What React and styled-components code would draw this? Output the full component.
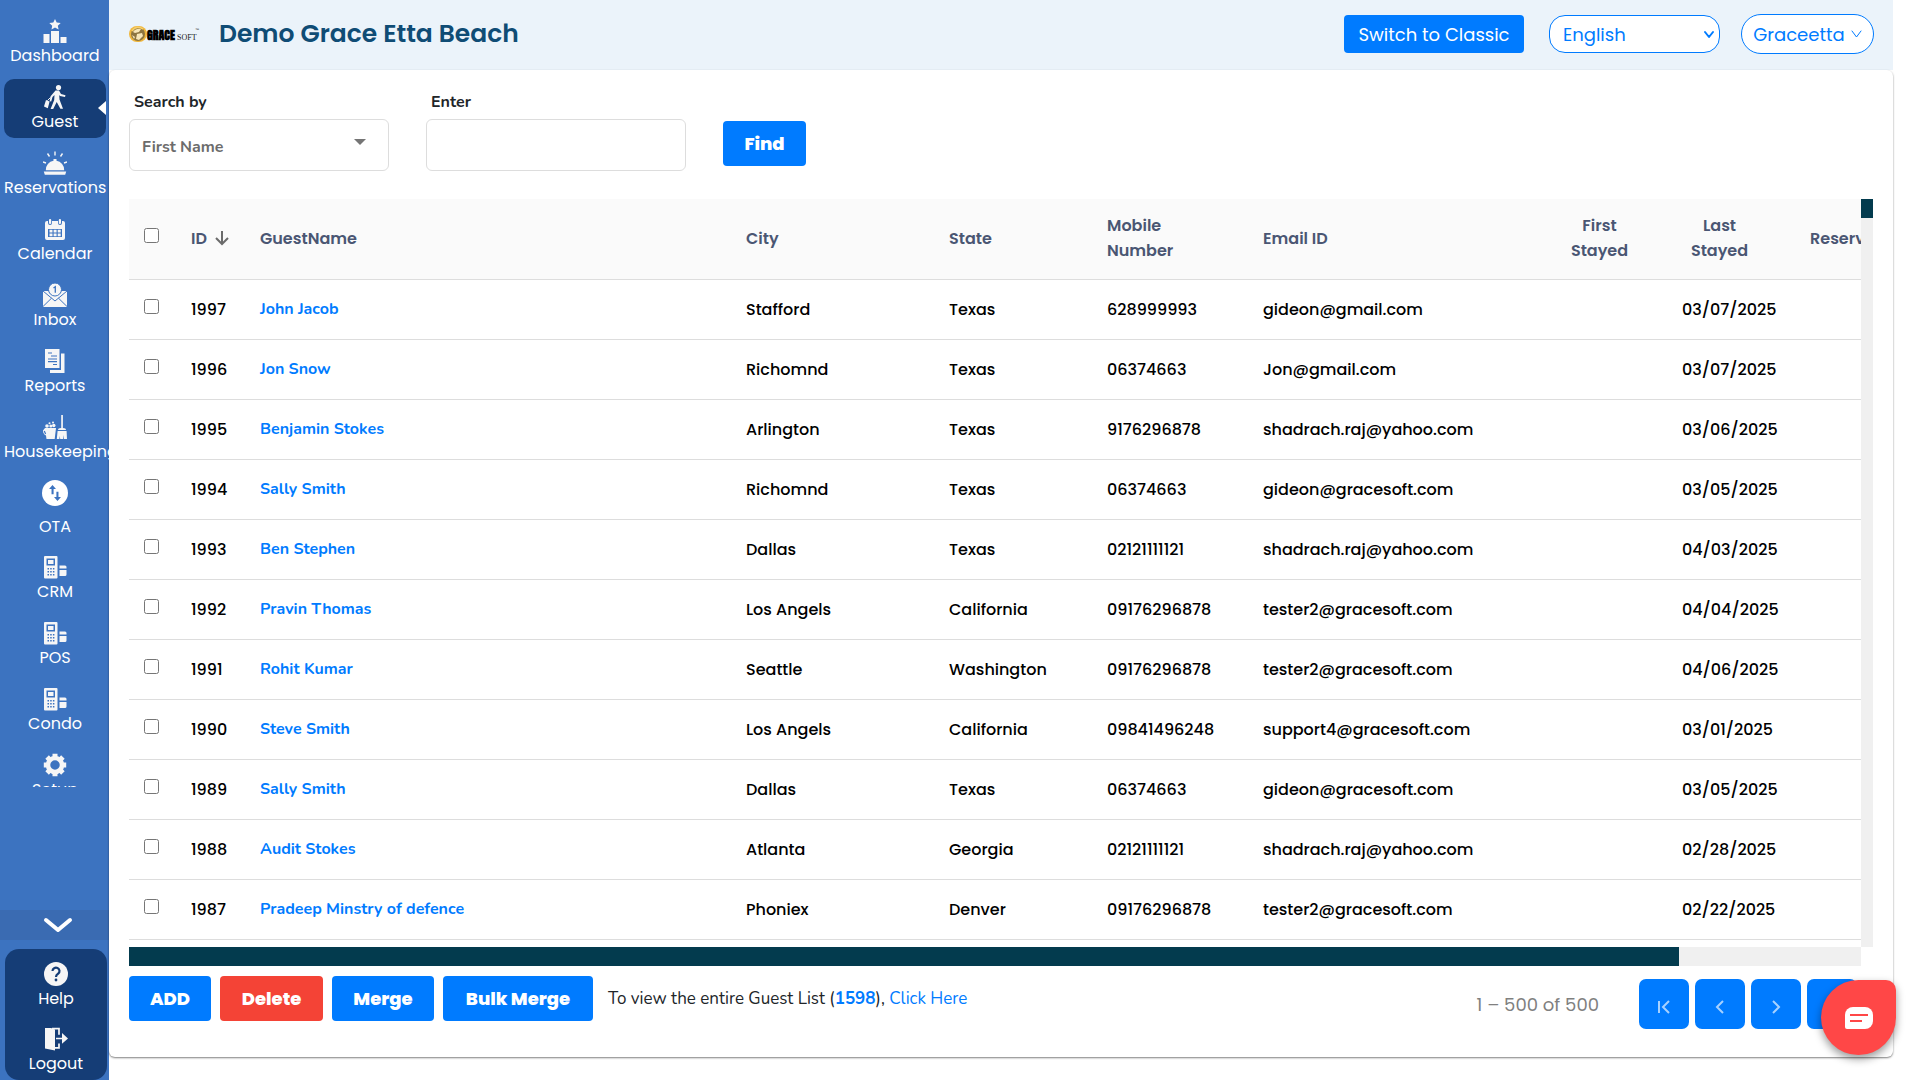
import React from 'react'
import styled, { createGlobalStyle } from 'styled-components'

const poppins = `Poppins, Inter, sans-serif`
const nunito = `Nunito, "Open Sans", sans-serif`

const GlobalStyle = createGlobalStyle`
    *, *::before, *::after {
        box-sizing: border-box;
    }
    body {
        margin: 0;
        background: #fff;
        font-family: ${poppins};
        font-size: 16px;
        overflow: hidden;
    }
    button, input, select {
        font-family: inherit;
        margin: 0;
    }
    a {
        text-decoration: none;
    }
`

const Page = styled.div`
    display: flex;
    height: 100vh;
`

/* sidebar */
const Sidebar = styled.aside`
    display: flex;
    flex-direction: column;
    flex: none;
    width: 109px;
    background: #3c73c0;
    overflow: hidden;
`
const NavSlot = styled.div`
    flex: 1;
    min-height: 0;
    padding-bottom: 123px;
`
const Nav = styled.nav`
    display: flex;
    flex-direction: column;
    gap: 7px;
    height: 100%;
    padding: 13px 3px 0 4px;
    overflow: hidden;
`
const NavItem = styled.a`
    position: relative;
    flex: none;
    display: flex;
    flex-direction: column;
    gap: ${p => (p.$tall ? '10px' : '2px')};
    height: ${p => (p.$tall ? '67px' : '59px')};
    padding-top: ${p => (p.$tall ? '5px' : '6px')};
    border-radius: 10px;
    background: ${p => (p.$active ? '#153d76' : 'transparent')};
    color: #fff;
    font-size: 16px;
    line-height: 22px;
    text-align: center;
    white-space: nowrap;

    svg {
        display: block;
        flex: none;
        align-self: center;
    }
`
const ActiveMark = styled.i`
    position: absolute;
    right: 0;
    top: 22px;
    border: 7px solid transparent;
    border-left: 0;
    border-right: 8px solid #fff;
`
const MoreButton = styled.button`
    display: flex;
    align-items: center;
    justify-content: center;
    height: 30px;
    padding: 0 0 0 6px;
    border: 0;
    background: #3a6bb2;
    color: #fff;
`
const SideFooter = styled.div`
    display: flex;
    flex-direction: column;
    gap: 6px;
    height: 131px;
    margin: 9px 2px 0 5px;
    padding-top: 7px;
    border-radius: 14px;
    background: #153d76;
`

/* top bar */
const Main = styled.main`
    display: flex;
    flex-direction: column;
    flex: 1;
    min-width: 0;
    padding: 0 27px 23px 0;
`
const TopBar = styled.header`
    display: flex;
    align-items: center;
    flex: none;
    height: 70px;
    padding: 0 19px 2px 20px;
    background: #ebf3fa;
`
const Title = styled.h1`
    flex: 1;
    margin: 0 0 0 19px;
    color: #0f4c75;
    font-size: 25px;
    font-weight: 600;
    line-height: 36px;
`
const SwitchButton = styled.button`
    width: 180px;
    height: 38px;
    padding: 0;
    border: 0;
    border-radius: 4px;
    background: #007bff;
    color: #fff;
    font-size: 18px;
`
const LanguageBox = styled.div`
    display: grid;
    align-items: center;
    margin: 0 21px 0 25px;
    color: #007bff;

    > * {
        grid-area: 1 / 1;
    }
    svg {
        justify-self: end;
        margin-right: 5px;
        pointer-events: none;
    }
`
const Language = styled.select`
    appearance: none;
    width: 171px;
    height: 38px;
    padding: 0 13px;
    border: 1px solid #007bff;
    border-radius: 16px;
    background: #fff;
    color: #007bff;
    font-size: 18px;
`
const UserButton = styled.button`
    display: flex;
    align-items: center;
    justify-content: center;
    gap: 6px;
    width: 133px;
    height: 40px;
    padding: 0;
    border: 1px solid #007bff;
    border-radius: 20px;
    background: #fff;
    color: #007bff;
    font-size: 18px;
`

/* card */
const Card = styled.section`
    display: flex;
    flex-direction: column;
    flex: 1;
    min-height: 0;
    padding: 20px 20px 28px;
    border-radius: 6px;
    background: #fff;
    box-shadow: 0 1px 2px rgba(0, 0, 0, 0.5);
`
const SearchForm = styled.form`
    display: flex;
    align-items: flex-end;
    gap: 37px;
    margin-bottom: 28px;
    font-family: ${nunito};
`
const Field = styled.div`
    display: grid;
    grid-template-rows: 24px 52px;
    row-gap: 5px;
    width: 260px;
`
const Label = styled.label`
    padding-left: 5px;
    color: #212529;
    font-size: 16px;
    font-weight: 700;
    line-height: 24px;
`
const SelectBox = styled.div`
    display: grid;
    align-items: center;

    > * {
        grid-area: 1 / 1;
    }
    svg {
        justify-self: end;
        margin: 0 23px 6px 0;
        pointer-events: none;
    }
`
const SearchBy = styled.select`
    appearance: none;
    width: 100%;
    height: 52px;
    padding: 3px 12px 0;
    border: 1px solid #ddd;
    border-radius: 6px;
    background: #fff;
    color: #6c6c6c;
    font-size: 16px;
    font-weight: 700;
`
const TextInput = styled.input`
    width: 100%;
    height: 52px;
    padding: 0 13px;
    border: 1px solid #ddd;
    border-radius: 6px;
    font-size: 16px;
`
const Button = styled.button`
    flex: none;
    height: 45px;
    width: ${p => p.$width}px;
    padding: 0;
    border: 0;
    border-radius: 4px;
    background: ${p => (p.$danger ? '#f44336' : '#007bff')};
    color: #fff;
    font-family: ${poppins};
    font-size: 18px;
    font-weight: 800;
`
const FindSlot = styled.div`
    padding-bottom: 5px;
`

/* table */
const TableArea = styled.div`
    display: grid;
    grid-template-columns: minmax(0, 1fr) 12px;
    grid-template-rows: minmax(0, 1fr) 19px;
    flex: 1;
    min-height: 0;
`
const Viewport = styled.div`
    overflow: hidden;
`
const VerticalTrack = styled.div`
    background: #f0f0f0;
`
const VerticalThumb = styled.div`
    height: 19px;
    background: #033b4e;
`
const HorizontalTrack = styled.div`
    background: #f0f0f0;
`
const HorizontalThumb = styled.div`
    width: 89.5%;
    height: 100%;
    background: #033b4e;
`
const Table = styled.table`
    width: 1935px;
    table-layout: fixed;
    border-collapse: separate;
    border-spacing: 0;
`
const HeadCell = styled.th`
    height: 81px;
    padding: 0 10px 2px;
    border-bottom: 1px solid #ddd;
    background: #fafafa;
    color: #4a5673;
    font-size: 16px;
    font-weight: 600;
    line-height: 25px;
    text-align: left;
`
const Cell = styled.td`
    height: 60px;
    padding: 0 10px;
    border-bottom: 1px solid #ddd;
    color: #000;
    font-size: 16px;
    font-weight: 500;
    white-space: nowrap;
`
const SortLabel = styled.span`
    display: flex;
    align-items: center;
    gap: 8px;
`
const Stacked = styled.span`
    display: block;
    width: 75px;
    text-align: ${p => (p.$center ? 'center' : 'left')};
`
const Check = styled.input`
    display: block;
    width: 15px;
    height: 15px;
    margin: 0 0 6px 5px;
`
const GuestLink = styled.a`
    display: block;
    padding-bottom: 2px;
    color: #007bff;
    font-family: ${nunito};
    font-size: 16px;
    font-weight: 700;
`

/* footer */
const Footer = styled.div`
    display: flex;
    align-items: flex-start;
    flex: none;
    gap: 9px;
    padding-top: 10px;
`
const Note = styled.p`
    flex: 1;
    margin: 0 0 0 6px;
    color: #212529;
    font-family: ${nunito};
    font-size: 17px;
    line-height: 45px;

    a {
        color: #007bff;
    }
    b {
        color: #007bff;
        font-weight: 700;
    }
`
const Pager = styled.div`
    display: flex;
    align-items: center;
    gap: 6px;
    padding: 3px 16px 0 0;
`
const PageRange = styled.span`
    margin-right: 34px;
    color: #808080;
    font-size: 18px;
`
const PageButton = styled.button`
    display: flex;
    align-items: center;
    justify-content: center;
    width: 50px;
    height: 50px;
    padding: 5px 0 0;
    border: 0;
    border-radius: 7px;
    background: #007bff;
`
const Chat = styled.button`
    position: fixed;
    right: 24px;
    bottom: 25px;
    display: flex;
    align-items: center;
    justify-content: center;
    width: 75px;
    height: 75px;
    padding: 0;
    border: 0;
    border-radius: 50% 10px 50% 50%;
    background: #ff4747;
    box-shadow: 0 4px 8px rgba(0, 0, 0, 0.4);
`

const Icon = ({ children, size = 24 }) => (
  <svg width={size} height={size} viewBox="0 0 24 24" fill="#f6f6f6" aria-hidden="true">
    {children}
  </svg>
)

const DashboardIcon = () => (
  <Icon>
    <path d="M12 0l1.700 3.600 4 .4-2.900 2.700.8 3.900L12 8.600l-3.500 2 .7-3.900L6.300 4l4-.4z" />
    <path d="M.5 15h6v9h-6zM8 12h8v12H8zM17.500 18h6v6h-6z" />
  </Icon>
)
const GuestIcon = () => (
  <Icon>
    <circle cx="15.500" cy="2.600" r="2.600" />
    <path d="M12.500 5.500h3.500l2 3.500 4.500 1.300-.5 1.600-5-1-.8-1 .3 4.500 3.500 9.300h-2.600L13.700 17l-3.500 7H7.600l3.600-9 .3-5-2 2-1.300 4.500-1.600-.3 1-5z" />
    <path d="M3 15l3.600 1.500-1.800 6.800L1 21.500z" />
    <path d="M4.500 15.500l3-3" stroke="#f6f6f6" />
  </Icon>
)
const BellIcon = () => (
  <Icon>
    <path d="M.8 20.500h22.400l-1 3.200H1.800zM2.800 19.200a9.200 9.200 0 0 1 7.700-9.400V8h3v1.800a9.200 9.200 0 0 1 7.700 9.400z" />
    <path d="M12 .5v4M4.500 2.500l2 3M19.500 2.500l-2 3M0 11l3 1M24 11l-3 1" stroke="#f6f6f6" strokeWidth="1.400" />
  </Icon>
)
const CalendarIcon = () => (
  <Icon>
    <path fillRule="evenodd" d="M4 4h1v2a2 2 0 0 0 4 0V4h6v2a2 2 0 0 0 4 0V4h1a2 2 0 0 1 2 2v15a2 2 0 0 1-2 2H4a2 2 0 0 1-2-2V6a2 2 0 0 1 2-2zm1 8v8h14v-8z" />
    <rect x="6" y="2" width="2.200" height="5" rx="1" />
    <rect x="15.800" y="2" width="2.200" height="5" rx="1" />
    <path d="M6.500 12.800h3v2.700h-3zM10.600 12.800h3v2.700h-3zM14.700 12.800h3v2.700h-3zM6.500 16.600h3v2.700h-3zM10.600 16.600h3v2.700h-3zM14.700 16.600h3v2.700h-3z" />
  </Icon>
)
const InboxIcon = () => (
  <Icon>
    <path d="M0 8h24v16H0z" />
    <path d="M0 8l12 10L24 8M0 23.500l8.500-8.300M24 23.500l-8.500-8.300" fill="none" stroke="#3c73c0" />
    <circle cx="12" cy="6.500" r="6.500" stroke="#3c73c0" />
    <path d="M10.500 5l1.800-1.300v6" fill="none" stroke="#3c73c0" strokeWidth="1.300" />
  </Icon>
)
const ReportsIcon = () => (
  <Icon>
    <path d="M2 0h14.500v19H2z" />
    <path d="M18 4.500h3.500V24H7v-3h11z" />
    <path d="M5 4h4M8 7h6M5 10h9M5 12.700h9M10 15.500h4" stroke="#3c73c0" strokeWidth="1.200" />
  </Icon>
)
const CleaningIcon = () => (
  <Icon>
    <path d="M18.200 0h1.700v13h-1.700zM15 15q0-2 3-2h2q3 0 3 2zM14.600 16h9l.4 8h-3l-.5-4-.3 4h-3l-.4-3-.4 3H13.800z" />
    <path d="M2 13h11l-1.300 11H3.500L3 20.500Q0 19 0 15.500z" />
    <path d="M1.300 16l1.300 3" stroke="#3c73c0" strokeWidth="1.200" />
    <circle cx="4" cy="11" r="1.800" />
    <circle cx="7.800" cy="11" r="1.500" />
    <circle cx="10.800" cy="10.500" r="1.700" />
    <circle cx="6.500" cy="8.300" r="1" />
    <circle cx="10" cy="7.500" r="1" />
  </Icon>
)
const OtaIcon = () => (
  <Icon size={26}>
    <circle cx="12" cy="12" r="12" fill="#fff" />
    <path d="M9.700 4.700l3.200 3.500h-2.200v5H8.800v-5H6.500zM14.300 19.300l-3.200-3.500h2.200v-5h1.900v5h2.300z" fill="#3c73c0" />
  </Icon>
)
const TerminalIcon = () => (
  <Icon>
    <path fillRule="evenodd" d="M2 1h11.500a1 1 0 0 1 1 1v20.500a1 1 0 0 1-1 1H2a1 1 0 0 1-1-1V2a1 1 0 0 1 1-1zm1.500 2.500v7h8.500v-7zM5 5h5.500v4H5z" />
    <path d="M4.500 13.800H12M4.500 16.800H12M4.500 19.800H12" stroke="#3c73c0" strokeWidth="1.500" strokeDasharray="1.500 1.200" />
    <path d="M16.500 10.500h5.500a1.500 1.500 0 0 1 1.500 1.500v1.500h-7zM16.500 15h7v4.500a1.500 1.500 0 0 1-1.500 1.500h-5.500z" />
  </Icon>
)
const GearIcon = () => (
  <Icon>
    <circle cx="12" cy="12" r="7" fill="none" stroke="#f6f6f6" strokeWidth="4.500" />
    <path d="M12 .8v4M12 19.200v4M.8 12h4M19.200 12h4M4.100 4.100l2.800 2.800M17.100 17.100l2.800 2.800M4.100 19.900l2.800-2.800M17.100 6.900l2.800-2.800" stroke="#f6f6f6" strokeWidth="5" />
  </Icon>
)
const HelpIcon = () => (
  <Icon>
    <circle cx="12" cy="12" r="12" />
    <path d="M8.500 9a3.500 3.300 0 1 1 5.700 2.600c-1.500 1.200-2.200 1.600-2.200 3.300" fill="none" stroke="#153d76" strokeWidth="2.200" />
    <circle cx="12" cy="18" r="1.400" fill="#153d76" />
  </Icon>
)
const LogoutIcon = () => (
  <Icon>
    <path d="M1 1h6l4 1.500V23.500L1 21.500z" />
    <path d="M8 1.700h7v6M15 16.500v4.300h-5" fill="none" stroke="#f6f6f6" strokeWidth="1.700" />
    <path d="M12 10.800h6V6l6 5.500-6 5.200v-4.400h-6z" />
  </Icon>
)

const Chevron = ({ width, height, stroke }) => (
  <svg width={width} height={height} viewBox={`0 0 ${width} ${height}`} fill="none" aria-hidden="true">
    <path
      d={`M${stroke} ${stroke}L${width / 2} ${height - stroke}L${width - stroke} ${stroke}`}
      stroke="currentColor"
      strokeWidth={stroke}
      strokeLinecap="round"
      strokeLinejoin="round"
    />
  </svg>
)

const Logo = () => (
  <svg width="71" height="20" viewBox="0 0 71 20" role="img" aria-label="GraceSoft">
    <rect x="0" y="2" width="18" height="16" rx="8" fill="#f0b73c" />
    <circle cx="9" cy="10" r="7" fill="#8c7440" />
    <path d="M4 8q3-4 8-3l-2 3-4 1zM8 10l5-1 1 3-4 4-3-1zM3 11l3 2-1 2z" fill="#f7e6b8" />
    <path d="M3 7q4-6 11-2" fill="none" stroke="#f8cf6a" strokeWidth="1.500" />
    <text x="18" y="16" fontFamily="Anton, Oswald, Bebas Neue, Roboto Condensed, Liberation Sans, sans-serif" fontWeight="700" fontSize="12" fill="#000">GRACE</text>
    <text x="48" y="16" fontFamily="Liberation Serif, serif" fontSize="8" fill="#222">SOFT</text>
    <text x="66" y="7" fontFamily="Liberation Sans, sans-serif" fontSize="4" fill="#222">™</text>
  </svg>
)

const navItems = [
  { label: 'Dashboard', icon: DashboardIcon },
  { label: 'Guest', icon: GuestIcon, active: true },
  { label: 'Reservations', icon: BellIcon },
  { label: 'Calendar', icon: CalendarIcon },
  { label: 'Inbox', icon: InboxIcon },
  { label: 'Reports', icon: ReportsIcon },
  { label: 'Housekeeping', icon: CleaningIcon },
  { label: 'OTA', icon: OtaIcon, tall: true },
  { label: 'CRM', icon: TerminalIcon },
  { label: 'POS', icon: TerminalIcon },
  { label: 'Condo', icon: TerminalIcon },
  { label: 'Setup', icon: GearIcon },
]

const guests = [
  [1997, 'John Jacob', 'Stafford', 'Texas', '628999993', 'gideon@gmail.com', '03/07/2025'],
  [1996, 'Jon Snow', 'Richomnd', 'Texas', '06374663', 'Jon@gmail.com', '03/07/2025'],
  [1995, 'Benjamin Stokes', 'Arlington', 'Texas', '9176296878', 'shadrach.raj@yahoo.com', '03/06/2025'],
  [1994, 'Sally Smith', 'Richomnd', 'Texas', '06374663', 'gideon@gracesoft.com', '03/05/2025'],
  [1993, 'Ben Stephen', 'Dallas', 'Texas', '02121111121', 'shadrach.raj@yahoo.com', '04/03/2025'],
  [1992, 'Pravin Thomas', 'Los Angels', 'California', '09176296878', 'tester2@gracesoft.com', '04/04/2025'],
  [1991, 'Rohit Kumar', 'Seattle', 'Washington', '09176296878', 'tester2@gracesoft.com', '04/06/2025'],
  [1990, 'Steve Smith', 'Los Angels', 'California', '09841496248', 'support4@gracesoft.com', '03/01/2025'],
  [1989, 'Sally Smith', 'Dallas', 'Texas', '06374663', 'gideon@gracesoft.com', '03/05/2025'],
  [1988, 'Audit Stokes', 'Atlanta', 'Georgia', '02121111121', 'shadrach.raj@yahoo.com', '02/28/2025'],
  [1987, 'Pradeep Minstry of defence', 'Phoniex', 'Denver', '09176296878', 'tester2@gracesoft.com', '02/22/2025'],
]

const columnWidths = [52, 69, 486, 203, 158, 156, 299, 120, 128, 264]

function SideMenu() {
  return (
    <Sidebar>
      <NavSlot>
        <Nav>
          {navItems.map(({ label, icon: ItemIcon, active, tall }) => (
            <NavItem key={label} href="#" $active={active} $tall={tall}>
              <ItemIcon />
              <span>{label}</span>
              {active && <ActiveMark />}
            </NavItem>
          ))}
        </Nav>
      </NavSlot>
      <MoreButton type="button" aria-label="More">
        <Chevron width={32} height={18} stroke={4} />
      </MoreButton>
      <SideFooter>
        <NavItem href="#">
          <HelpIcon />
          <span>Help</span>
        </NavItem>
        <NavItem href="#">
          <LogoutIcon />
          <span>Logout</span>
        </NavItem>
      </SideFooter>
    </Sidebar>
  )
}

function Header() {
  return (
    <TopBar>
      <Logo />
      <Title>Demo Grace Etta Beach</Title>
      <SwitchButton type="button">Switch to Classic</SwitchButton>
      <LanguageBox>
        <Language aria-label="Language" defaultValue="English">
          <option>English</option>
        </Language>
        <Chevron width={12} height={9} stroke={2} />
      </LanguageBox>
      <UserButton type="button">
        Graceetta
        <Chevron width={11} height={8} stroke={1} />
      </UserButton>
    </TopBar>
  )
}

function Search() {
  return (
    <SearchForm>
      <Field>
        <Label htmlFor="search-by">Search by</Label>
        <SelectBox>
          <SearchBy id="search-by" defaultValue="First Name">
            <option>First Name</option>
          </SearchBy>
          <svg width="12" height="6" viewBox="0 0 12 6" aria-hidden="true">
            <path d="M0 0h12L6 6z" fill="#757575" />
          </svg>
        </SelectBox>
      </Field>
      <Field>
        <Label htmlFor="search-text">Enter</Label>
        <TextInput id="search-text" type="text" />
      </Field>
      <FindSlot>
        <Button type="button" $width={83}>Find</Button>
      </FindSlot>
    </SearchForm>
  )
}

function GuestTable() {
  return (
    <TableArea>
      <Viewport>
        <Table>
          <colgroup>
            {columnWidths.map((width, i) => (
              <col key={i} width={width} />
            ))}
          </colgroup>
          <thead>
            <tr>
              <HeadCell><Check type="checkbox" aria-label="Select all" /></HeadCell>
              <HeadCell>
                <SortLabel>
                  ID
                  <svg width="14" height="15" viewBox="0 0 14 15" fill="none" stroke="#6b6b6b" strokeWidth="2" aria-hidden="true">
                    <path d="M7 0v13M1 7l6 6 6-6" />
                  </svg>
                </SortLabel>
              </HeadCell>
              <HeadCell>GuestName</HeadCell>
              <HeadCell>City</HeadCell>
              <HeadCell>State</HeadCell>
              <HeadCell><Stacked>Mobile Number</Stacked></HeadCell>
              <HeadCell>Email ID</HeadCell>
              <HeadCell><Stacked $center>First Stayed</Stacked></HeadCell>
              <HeadCell><Stacked $center>Last Stayed</Stacked></HeadCell>
              <HeadCell>Reservations</HeadCell>
            </tr>
          </thead>
          <tbody>
            {guests.map(([id, name, city, state, mobile, email, last]) => (
              <tr key={id}>
                <Cell><Check type="checkbox" aria-label={`Select ${name}`} /></Cell>
                <Cell>{id}</Cell>
                <Cell><GuestLink href="#">{name}</GuestLink></Cell>
                <Cell>{city}</Cell>
                <Cell>{state}</Cell>
                <Cell>{mobile}</Cell>
                <Cell>{email}</Cell>
                <Cell />
                <Cell>{last}</Cell>
                <Cell />
              </tr>
            ))}
          </tbody>
        </Table>
      </Viewport>
      <VerticalTrack>
        <VerticalThumb />
      </VerticalTrack>
      <HorizontalTrack>
        <HorizontalThumb />
      </HorizontalTrack>
    </TableArea>
  )
}

const pageIcons = {
  'First page': 'M2 2v12M12 2L6 8l6 6',
  'Previous page': 'M10 2L4 8l6 6',
  'Next page': 'M4 2l6 6-6 6',
  'Last page': 'M2 2l6 6-6 6M12 2v12',
}

function TableFooter() {
  return (
    <Footer>
      <Button type="button" $width={82}>ADD</Button>
      <Button type="button" $width={103} $danger>Delete</Button>
      <Button type="button" $width={102}>Merge</Button>
      <Button type="button" $width={150}>Bulk Merge</Button>
      <Note>
        To view the entire Guest List (<b>1598</b>), <a href="#">Click Here</a>
      </Note>
      <Pager>
        <PageRange>1 – 500 of 500</PageRange>
        {Object.entries(pageIcons).map(([label, d]) => (
          <PageButton key={label} type="button" aria-label={label}>
            <svg width="14" height="16" viewBox="0 0 14 16" fill="none" stroke="#a6d1ff" strokeWidth="2">
              <path d={d} />
            </svg>
          </PageButton>
        ))}
      </Pager>
    </Footer>
  )
}

function App() {
  return (
    <Page>
      <GlobalStyle />
      <SideMenu />
      <Main>
        <Header />
        <Card>
          <Search />
          <GuestTable />
          <TableFooter />
        </Card>
      </Main>
      <Chat type="button" aria-label="Chat">
        <svg width="28" height="22" viewBox="0 0 28 22" aria-hidden="true">
          <path d="M8 0h12a8 8 0 0 1 8 8v6a8 8 0 0 1-8 8H2a2 2 0 0 1-2-2V8a8 8 0 0 1 8-8z" fill="#fff" />
          <path d="M5 8h18M5 14h12" stroke="#ff4747" strokeWidth="2" />
        </svg>
      </Chat>
    </Page>
  )
}

export default App
